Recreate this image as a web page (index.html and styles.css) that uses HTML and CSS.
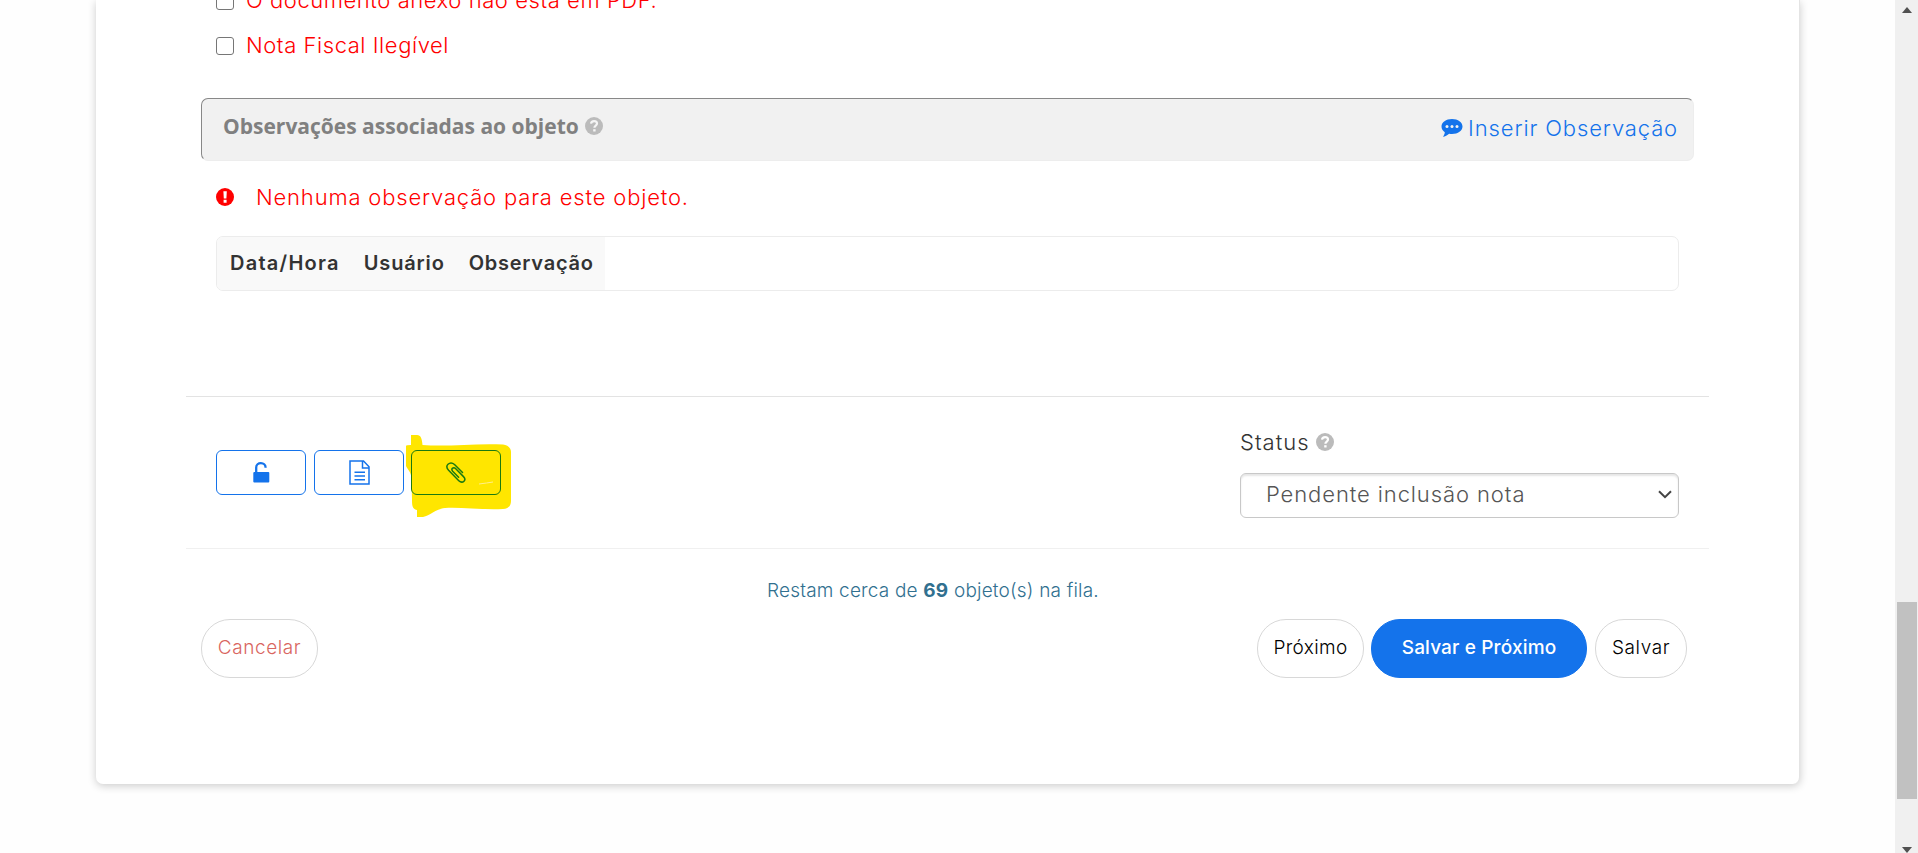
FILE: index.html
```
<!DOCTYPE html>
<html lang="pt-BR">
<head>
<meta charset="utf-8">
<title>Objeto</title>
<link rel="stylesheet" href="styles.css">
</head>
<body>
<div class="page">
  <main class="card">
    <section class="reasons">
      <label class="reason"><span class="box"></span><span class="t t-doc">O documento anexo não está em PDF.</span></label>
      <label class="reason"><span class="box"></span><span class="t t-nota">Nota Fiscal Ilegível</span></label>
    </section>
    <header class="bar">
      <h2 class="bar-title"><span class="t t-title">Observações associadas ao objeto</span>
        <svg class="help" viewBox="0 0 18 18"><circle cx="9" cy="9" r="9" fill="#bbb"/><path d="M6 6.700C6.200 4.800 7.500 4.100 9.100 4.100C10.900 4.100 12 5.100 12 6.600C12 8.600 9.400 8.500 9.400 10.700" fill="none" stroke="#f5f5f5" stroke-width="2.200"/><rect x="8.200" y="12.200" width="2.400" height="2.300" fill="#f5f5f5"/></svg>
      </h2>
      <a class="insert">
        <svg class="comment" viewBox="0 0 22 18"><path d="M11 0C17 0 21.500 3.300 21.500 7.500S17 15 11 15C10 15 9 14.900 8.100 14.700C6.400 16.300 4.200 17.500 1.800 17.800C2.900 16.600 3.600 15.200 3.800 13.200C1.800 11.900 .5 9.900 .5 7.500C.5 3.300 5 0 11 0Z" fill="#1473eb"/><g fill="#f1f1f1"><circle cx="6" cy="7.600" r="1.500"/><circle cx="11" cy="7.600" r="1.500"/><circle cx="16" cy="7.600" r="1.500"/></g></svg>
        <span class="t t-insert">Inserir Observação</span>
      </a>
    </header>
    <p class="alert">
      <svg class="warn" viewBox="0 0 18 18"><circle cx="9" cy="9" r="9" fill="red"/><path d="M7.400 3.200H10.800L10.400 10.400H7.800ZM7.600 11.800H10.600V14.700H7.600Z" fill="#fff"/></svg>
      <span class="t t-none">Nenhuma observação para este objeto.</span>
    </p>
    <div class="table"><div class="head">
      <span class="t t-data">Data/Hora</span><span class="t t-user">Usuário</span><span class="t t-obs">Observação</span>
    </div></div>
    <section class="actions">
      <div class="tools">
        <button class="tool"><svg width="17" height="21" viewBox="0 0 17 21"><path d="M3.200 11V5.600C3.200 2.900 5.300 1.200 7.900 1.200S12.600 2.900 12.600 5.700" fill="none" stroke="#1473eb" stroke-width="2.300"/><rect x=".3" y="10" width="16" height="10.500" rx="1" fill="#1473eb"/></svg></button>
        <button class="tool"><svg width="21" height="25" viewBox="0 0 21 25" fill="none" stroke="#1473eb" stroke-width="1.500"><path d="M1 1H14.500L20 6.800V24H1ZM13.500 1V8H20M5.500 12.300H16M5.500 16H16M5.500 19.700H16"/></svg></button>
        <button class="tool marked">
          <svg class="marker" width="106" height="84" viewBox="0 0 106 84"><path d="M6 1H12C16 1 17 5 17.500 11C44 13 70 9 98 10.500C103 11 106 14 106 18V67C106 72 103 75 98 75C76 76 56 73 40 74C30 75 25 82 18 83H12V76C8 75 7 73 7 66L6.500 44C6 38 3 36 1 32V12Q1 11 6 11Z" fill="#ffe600"/><path d="M74 50Q82 49 88 48" fill="none" stroke="#fff08a"/></svg>
          <svg class="clip" width="20" height="22" viewBox="0 0 20 22" fill="none" stroke="#1b7a10" stroke-width="1.500" stroke-linecap="round"><path d="M16.500 10.500L8.500 2.500C6.300 .6 3.600 .8 2 2.300S.6 6 2.600 8.200L12.800 18.700C14.600 20.500 16.700 20.500 18 19.200S19.100 16.200 17.500 14.600L9.500 6.500C8.500 5.500 7.200 5.600 6.400 6.400S5.800 8.300 6.700 9.300L12.600 15.200"/></svg>
        </button>
      </div>
      <div class="status">
        <div class="status-label"><span class="t t-status">Status</span>
          <svg class="help" viewBox="0 0 18 18"><circle cx="9" cy="9" r="9" fill="#bbb"/><path d="M6 6.700C6.200 4.800 7.500 4.100 9.100 4.100C10.900 4.100 12 5.100 12 6.600C12 8.600 9.400 8.500 9.400 10.700" fill="none" stroke="#fff" stroke-width="2.200"/><rect x="8.200" y="12.200" width="2.400" height="2.300" fill="#fff"/></svg></div>
        <div class="select"><span class="t t-pend">Pendente inclusão nota</span>
          <svg width="14" height="9" viewBox="0 0 14 9"><path d="M1 1.200L7 7.200L13 1.200" fill="none" stroke="#444" stroke-width="2"/></svg></div>
      </div>
    </section>
    <p class="remaining"><span class="t t-rest">Restam cerca de <b>69</b> objeto(s) na fila.</span></p>
    <footer class="buttons">
      <button class="pill cancel"><span class="t t-cancel">Cancelar</span></button>
      <button class="pill next"><span class="t t-next">Próximo</span></button>
      <button class="pill primary"><span class="t t-prim">Salvar e Próximo</span></button>
      <button class="pill save"><span class="t t-save">Salvar</span></button>
    </footer>
  </main>
  <aside class="scrollbar"><i class="up"></i><i class="thumb"></i><i class="down"></i></aside>
</div>
</body>
</html>
```
FILE: styles.css
```
* { box-sizing: border-box; }
body { margin: 0; height: 853px; overflow: hidden; background: #fefefe; color: #333; font-family: Inter, Lato, sans-serif; font-size: 22px; font-weight: 300; }
.page { display: flex; justify-content: space-between; height: 853px; }
.card { position: relative; z-index: 0; width: 1704px; height: 784px; margin-left: 96px; padding: 0 90px; background: #fff; border-radius: 0 0 7px 7px; border-right: 1px solid #e4e4e4; box-shadow: 0 2px 8px rgba(0,0,0,.2); }
.t { white-space: nowrap; }
.t-doc, .t-nota { letter-spacing: .56px; }
.t-insert { letter-spacing: .87px; }
.t-none { letter-spacing: .82px; }
.t-data { letter-spacing: 1.25px; }
.t-user { letter-spacing: .85px; }
.t-obs { letter-spacing: .75px; }
.t-status { letter-spacing: 1px; }
.t-pend { letter-spacing: .9px; }
.t-rest { letter-spacing: .19px; }
.t-cancel, .t-save { letter-spacing: .6px; }
.t-next { letter-spacing: .35px; }
.t-prim { letter-spacing: .15px; }
.reasons { height: 98px; padding: 0 30px; color: red; overflow: hidden; }
.reason { display: flex; align-items: center; gap: 12px; height: 45px; line-height: 43px; }
.reason:first-child { margin-top: -22px; }
.box { width: 18px; height: 18px; border: 1.500px solid #767676; border-radius: 3px; background: #fff; }
.bar { display: flex; justify-content: space-between; height: 63px; margin: 0 15px; padding: 0 15px 0 21px; background: #f1f1f1; border: 1px solid #ededed; border-top-color: #888; border-left-color: #888; border-radius: 7px; }
.bar-title { display: flex; align-items: center; gap: 6px; height: 54px; margin: 0; color: #808080; font: 700 21px "Open Sans", sans-serif; }
.help { width: 18px; height: 18px; flex: none; }
.insert { display: flex; align-items: center; gap: 5px; height: 58px; color: #1473eb; }
.comment { width: 22px; height: 18px; }
.alert { display: flex; align-items: center; gap: 22px; height: 75px; margin: 0; padding: 0 0 3px 30px; color: red; }
.warn { width: 18px; height: 18px; }
.table { height: 55px; margin: 0 30px; border: 1px solid #ececec; border-radius: 7px; overflow: hidden; }
.head { display: flex; gap: 24px; width: 388px; height: 53px; padding-left: 13px; line-height: 52px; background: #f9f9f9; font-size: 20px; font-weight: 600; }
.actions { display: flex; justify-content: space-between; height: 153px; margin-top: 105px; padding: 0 30px; border-top: 1px solid #e3e3e3; border-bottom: 1px solid #f0f0f0; }
.tools { display: flex; gap: 8px; padding-top: 53px; }
.tool { position: relative; display: flex; align-items: center; justify-content: center; width: 90px; height: 45px; padding: 0; background: none; border: 1px solid #1473eb; border-radius: 6px; }
.tool.marked { margin-left: -1px; border-color: #1b7a10; }
.marker { position: absolute; left: -7px; top: -17px; z-index: -1; }
.status { width: 439px; padding-top: 28px; }
.status-label { display: flex; align-items: center; gap: 6px; height: 34px; margin-bottom: 14px; }
.select { display: flex; align-items: center; justify-content: space-between; height: 45px; padding: 0 6px 3px 25px; color: #555; border: 1px solid #c8c8c8; border-radius: 6px; box-shadow: inset 0 2px 2px rgba(0,0,0,.1); }
.remaining { height: 70px; margin: 0; padding-left: 581px; line-height: 83px; color: #31708f; font-size: 19px; }
.remaining b { font-weight: 700; }
.buttons { display: flex; padding: 0 22px 0 15px; }
.pill { height: 59px; padding: 0 0 3px; border: 1px solid #d8d8d8; border-radius: 29px; background: #fff; color: #000; font: 300 19px Inter, sans-serif; }
.cancel { width: 117px; margin-right: auto; color: #d9665f; }
.next { width: 107px; margin-right: 7px; }
.primary { width: 216px; margin-right: 8px; background: #1473eb; border-color: #1473eb; color: #fff; font-weight: 500; }
.save { width: 92px; }
.scrollbar { display: flex; flex-direction: column; align-items: center; width: 23px; height: 853px; padding-top: 7px; background: #f0f0f0; }
.up { border: 5px solid transparent; border-top: 0; border-bottom: 6px solid #505050; }
.thumb { width: 20px; height: 197px; margin: 589px 0 48px; background: #c1c1c1; }
.down { border: 5px solid transparent; border-bottom: 0; border-top: 6px solid #505050; }
```
